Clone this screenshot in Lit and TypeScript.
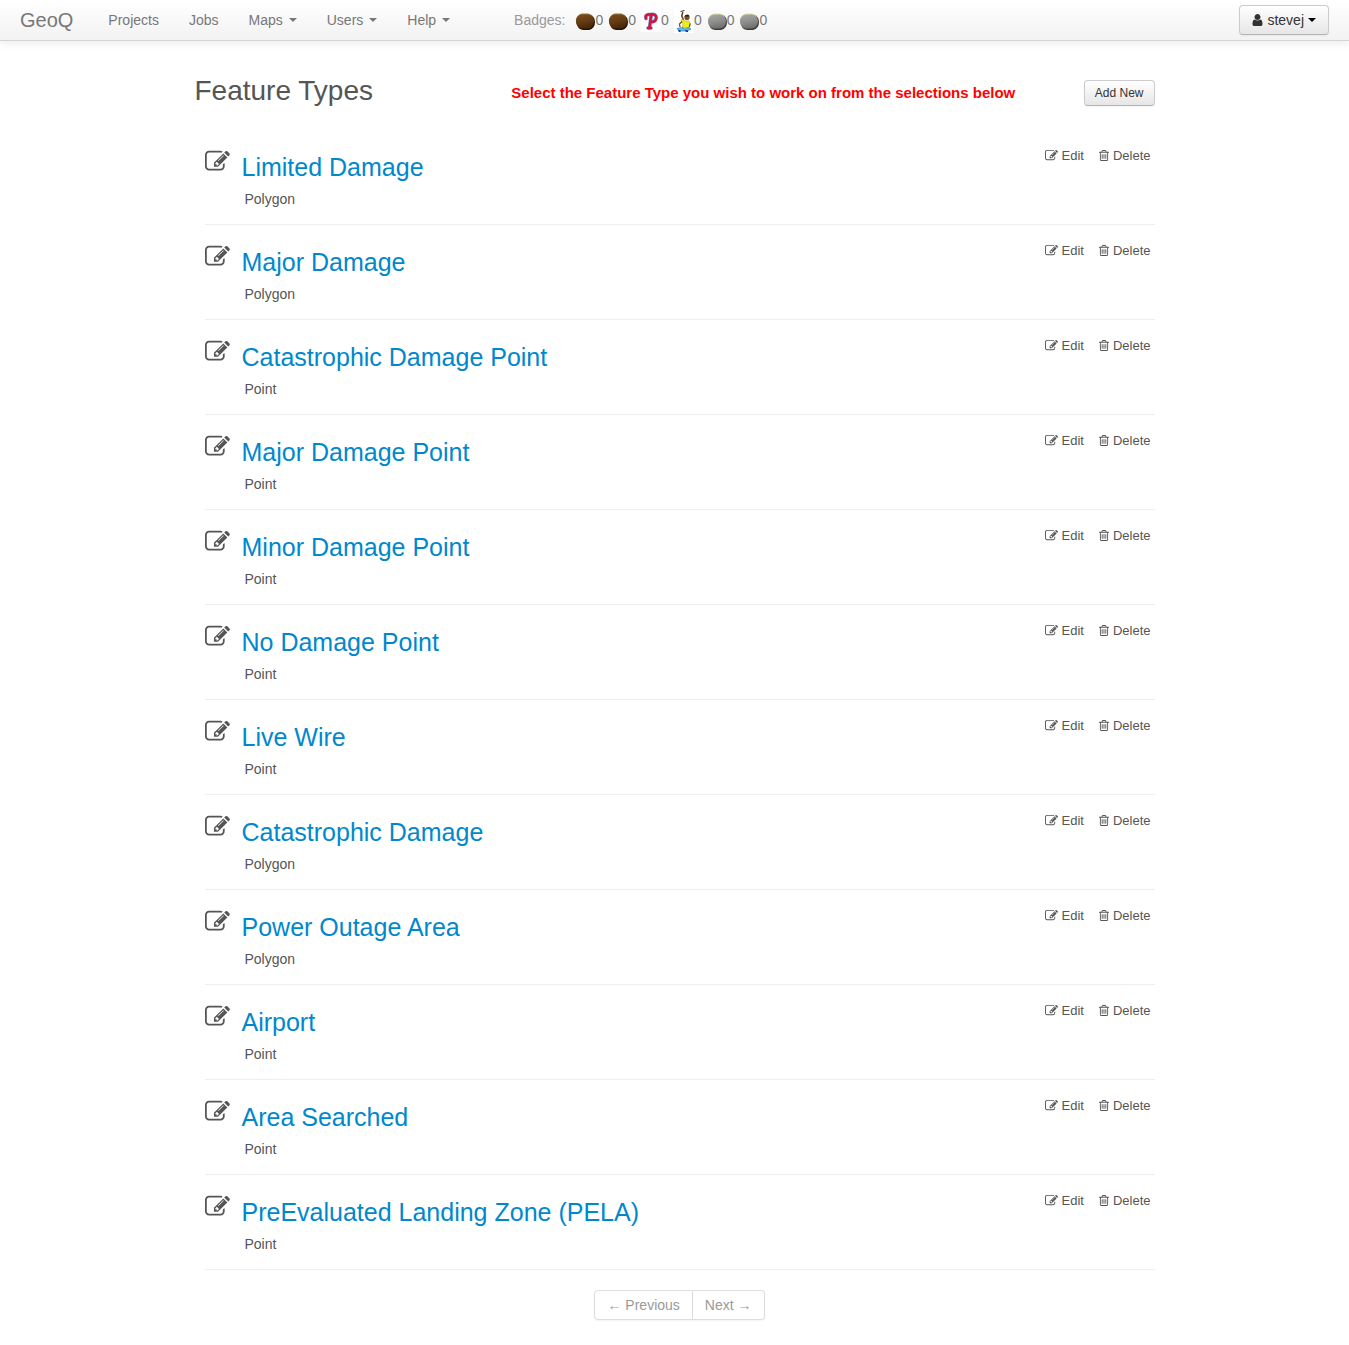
import { LitElement, html, css, svg } from "lit";
import { customElement, property } from "lit/decorators.js";

const EDIT =
  "M888 1184l116-116-152-152-116 116v56h96v96h56zm440-720q-16-16-33 1l-350 350q-17 17-1 33t33-1l350-350q17-17 1-33zm80 594v190q0 119-84.5 203.5t-203.5 84.5h-832q-119 0-203.5-84.5t-84.5-203.5v-832q0-119 84.5-203.5t203.5-84.5h832q63 0 117 25 15 7 18 23 3 17-9 29l-49 49q-14 14-32 8-23-6-45-6h-832q-66 0-113 47t-47 113v832q0 66 47 113t113 47h832q66 0 113-47t47-113v-126q0-13 9-22l64-64q15-15 35-7t20 29zm-96-738l288 288-672 672h-288v-288zm444 132l-92 92-288-288 92-92q28-28 68-28t68 28l152 152q28 28 28 68t-28 68z";
const TRASH =
  "M704 736v576q0 14-9 23t-23 9h-64q-14 0-23-9t-9-23v-576q0-14 9-23t23-9h64q14 0 23 9t9 23zm256 0v576q0 14-9 23t-23 9h-64q-14 0-23-9t-9-23v-576q0-14 9-23t23-9h64q14 0 23 9t9 23zm256 0v576q0 14-9 23t-23 9h-64q-14 0-23-9t-9-23v-576q0-14 9-23t23-9h64q14 0 23 9t9 23zm128 724v-948h-896v948q0 22 7 40.5t14.5 27 10.5 8.5h832q3 0 10.5-8.5t14.5-27 7-40.5zm-672-1076h448l-48-117q-7-9-17-11h-317q-10 2-17 11zm928 32v64q0 14-9 23t-23 9h-96v948q0 83-47 143.5t-113 60.5h-832q-66 0-113-58.5t-47-141.5v-952h-96q-14 0-23-9t-9-23v-64q0-14 9-23t23-9h309l70-167q15-37 54-63t79-26h320q40 0 79 26t54 63l70 167h309q14 0 23 9t9 23z";
const USER =
  "M1536 1399q0 109-62.5 187t-150.5 78h-854q-88 0-150.5-78t-62.5-187q0-85 8.5-160.5t31.5-152 58.5-131 94-89 134.5-34.5q131 128 313 128t313-128q76 0 134.5 34.5t94 89 58.5 131 31.5 152 8.5 160.5zm-256-887q0 159-112.5 271.5t-271.5 112.5-271.5-112.5-112.5-271.5 112.5-271.5 271.5-112.5 271.5 112.5 112.5 271.5z";

const stone = (id: string, light: string, mid: string, dark: string, edge: string, rim: string) => svg`
  <defs>
    <linearGradient id=${id} x1="0" y1="0" x2="0.3" y2="1">
      <stop offset="0" stop-color=${light}></stop>
      <stop offset="0.6" stop-color=${mid}></stop>
      <stop offset="1" stop-color=${dark}></stop>
    </linearGradient>
  </defs>
  <path d="M7 2.500H14Q20 4 20 10Q20 16.500 14 18H8Q2 17 1.500 10Z" fill=${edge}></path>
  <path d="M7 1.500H13Q16 2 17.500 4.500L3 13Q0.500 11 0.800 8Q2 2.500 7 1.500Z" fill=${rim}></path>
  <path d="M7 2.500H13Q18.800 3.500 19 9Q18.800 15.500 13 16.500H7Q1.200 15.500 1 9.500Q1.200 3.500 7 2.500Z" fill="url(#${id})"></path>`;

const brown = svg`${stone("brown", "#7a4d1c", "#633a12", "#4a280a", "#1f1608", "#8a7445")}`;
const grey = svg`${stone("grey", "#a8a8a8", "#8d8d8d", "#727272", "#3c3c3a", "#e2dc9c")}`;

const emblem = svg`
  <rect width="20" height="20" fill="#fff"></rect>
  <g fill="none" stroke-linecap="round" stroke-linejoin="round">
    <path d="M5 6.500C3.800 3 7 2.200 10 2.200C14 2 15.500 3.800 15.200 6C14.800 9 12.500 10 10.500 9.800M10.200 3L8.500 16M7 16H10" stroke="#6f93c8" stroke-width="3.600"></path>
    <path d="M5 6.500C3.800 3 7 2.200 10 2.200C14 2 15.500 3.800 15.200 6C14.800 9 12.500 10 10.500 9.800M10.200 3L8.500 16M7 16H10" stroke="#d8123f" stroke-width="2.400"></path>
  </g>`;

const person = svg`
  <rect width="20" height="24" fill="#fff"></rect>
  <path d="M9.500 11L7.800 7L8.800 3" fill="none" stroke="#6b4420" stroke-width="1.600"></path>
  <path d="M6.500 2.500L10.500 1.500" stroke="#333" stroke-width="1"></path>
  <circle cx="13" cy="8.500" r="2.600" fill="#7a5028"></circle>
  <path d="M10.200 7.500Q12 4.500 15 6L15.500 7.500Z" fill="#2b2118"></path>
  <path d="M8 10L11 12L15 12L16.500 15L14.500 18.500H8.500L9 14L7 12Z" fill="#f2ee12" stroke="#99921a" stroke-width="0.500"></path>
  <path d="M8 12.500L5.500 15L6 18M16 14.500L15.500 18" fill="none" stroke="#6b4420" stroke-width="1.200"></path>
  <path d="M3 19.500L8 18.500L11 20L15 18.500L17 20L13 22L5 22Z" fill="#59c5e8" stroke="#1e6a9c" stroke-width="0.600"></path>
  <path d="M4.500 21.500L6.500 22.500M11.500 21.500L14 22.500" stroke="#1722a0" stroke-width="1.600"></path>`;

const BADGES = [
  { label: "Brown badge", art: brown, tall: false },
  { label: "Brown badge", art: brown, tall: false },
  { label: "Emblem badge", art: emblem, tall: false },
  { label: "Person badge", art: person, tall: true },
  { label: "Grey badge", art: grey, tall: false },
  { label: "Grey badge", art: grey, tall: false },
];

const NAV = [
  { label: "Projects", menu: false },
  { label: "Jobs", menu: false },
  { label: "Maps", menu: true },
  { label: "Users", menu: true },
  { label: "Help", menu: true },
];

const FEATURES: [string, string][] = [
  ["Limited Damage", "Polygon"],
  ["Major Damage", "Polygon"],
  ["Catastrophic Damage Point", "Point"],
  ["Major Damage Point", "Point"],
  ["Minor Damage Point", "Point"],
  ["No Damage Point", "Point"],
  ["Live Wire", "Point"],
  ["Catastrophic Damage", "Polygon"],
  ["Power Outage Area", "Polygon"],
  ["Airport", "Point"],
  ["Area Searched", "Point"],
  ["PreEvaluated Landing Zone (PELA)", "Point"],
];

const glyph = (d: string, cls: string, box = "0 0 1792 1792") =>
  html`<svg class=${cls} viewBox=${box} fill="currentColor" aria-hidden="true"><path d=${d}></path></svg>`;

@customElement("nav-bar")
class NavBar extends LitElement {
  static styles = css`
    :host { display: block; }
    .bar {
      display: flex;
      align-items: center;
      height: 40px;
      padding: 0 20px;
      background: linear-gradient(#ffffff, #f2f2f2);
      border-bottom: 1px solid #d4d4d4;
      box-shadow: 0 1px 10px rgba(0, 0, 0, 0.1);
      color: #777;
    }
    .brand {
      margin-right: 20px;
      font-size: 20px;
      color: #777;
      text-decoration: none;
    }
    .links { display: flex; }
    .link {
      display: flex;
      align-items: center;
      gap: 6px;
      padding: 10px 15px;
      border: 0;
      background: none;
      font: inherit;
      color: #777;
      text-decoration: none;
    }
    .caret {
      border: 4px solid transparent;
      border-top-color: currentColor;
      border-bottom: 0;
    }
    .badges {
      display: flex;
      align-items: center;
      gap: 5px;
      margin-left: 49px;
    }
    .caption { margin-right: 5px; color: #999; }
    .badge { display: flex; align-items: center; height: 20px; }
    .art { width: 20px; height: 20px; margin-top: 3px; }
    .tall { height: 24px; margin-top: 1px; }
    .account {
      display: flex;
      align-items: center;
      gap: 4px;
      height: 30px;
      margin-left: auto;
      padding: 0 12px;
      border: 1px solid #ccc;
      border-bottom-color: #b3b3b3;
      border-radius: 4px;
      background: linear-gradient(#ffffff, #e6e6e6);
      box-shadow: 0 1px 2px rgba(0, 0, 0, 0.05);
      font: inherit;
      color: #333;
    }
    .user { width: 11px; height: 14px; }
    .dark { color: #000; }
  `;

  render() {
    return html`
      <nav class="bar">
        <a class="brand" href="#">GeoQ</a>
        <div class="links">
          ${NAV.map((n) =>
            n.menu
              ? html`<button class="link" type="button">${n.label}<span class="caret"></span></button>`
              : html`<a class="link" href="#">${n.label}</a>`
          )}
        </div>
        <div class="badges">
          <span class="caption">Badges:</span>
          ${BADGES.map(
            (b) => html`<span class="badge"><svg class="art ${b.tall ? "tall" : ""}" viewBox="0 0 20 ${b.tall ? 24 : 20}" role="img" aria-label=${b.label}>${b.art}</svg>0</span>`
          )}
        </div>
        <button class="account" type="button">
          ${glyph(USER, "user", "192 0 1408 1792")}<span>stevej</span><span class="caret dark"></span>
        </button>
      </nav>
    `;
  }
}

@customElement("feature-row")
class FeatureRow extends LitElement {
  @property() name = "";
  @property() kind = "";

  static styles = css`
    :host { display: block; }
    .row {
      display: flex;
      align-items: flex-start;
      padding: 18px 0 15px;
      border-bottom: 1px solid #eee;
    }
    .big { flex: none; width: 25px; height: 25px; margin: 1px 12px 0 0; color: #555; }
    .body { flex: 1; }
    .title { margin: 0 0 3px; font-size: 25px; font-weight: normal; line-height: 38px; }
    .name { color: #0088cc; text-decoration: none; }
    .kind { margin: 0; padding-left: 3px; line-height: 20px; }
    .actions { display: flex; gap: 15px; padding: 0 4px; font-size: 13px; line-height: 16px; }
    .action { display: flex; align-items: flex-start; gap: 4px; color: #555; text-decoration: none; }
    .edit { width: 13px; height: 13px; margin-top: 1px; }
    .trash { width: 10px; height: 13px; margin-top: 1px; }
  `;

  render() {
    return html`
      <article class="row">
        ${glyph(EDIT, "big")}
        <div class="body">
          <h3 class="title"><a class="name" href="#">${this.name}</a></h3>
          <p class="kind">${this.kind}</p>
        </div>
        <div class="actions">
          <a class="action" href="#">${glyph(EDIT, "edit")}Edit</a>
          <a class="action" href="#">${glyph(TRASH, "trash", "192 0 1408 1792")}Delete</a>
        </div>
      </article>
    `;
  }
}

@customElement("app-root")
class AppRoot extends LitElement {
  static styles = css`
    :host {
      display: block;
      min-height: 100vh;
      background: #fff;
      color: #555;
      font: 14px/20px "Liberation Sans", Arial, Helvetica, sans-serif;
    }
    .page { max-width: 960px; margin: 0 auto; padding: 30px 0 25px; }
    .head { display: flex; align-items: center; height: 44px; margin-bottom: 15px; }
    .heading { flex: 0 0 33%; align-self: flex-start; margin: 0; font-size: 28px; font-weight: normal; line-height: 40px; }
    .hint { flex: 1; margin: 0; font-size: 15px; font-weight: bold; color: #f00; }
    .add {
      height: 26px;
      padding: 0 10px;
      border: 1px solid #ccc;
      border-bottom-color: #b3b3b3;
      border-radius: 4px;
      background: linear-gradient(#ffffff, #e6e6e6);
      box-shadow: 0 1px 2px rgba(0, 0, 0, 0.05);
      font: inherit;
      font-size: 12px;
      color: #333;
    }
    .list { padding-left: 10px; }
    .pager { display: flex; justify-content: center; margin-top: 20px; padding-left: 10px; }
    .step {
      height: 30px;
      padding: 0 12px;
      border: 1px solid #ddd;
      background: #fff;
      box-shadow: 0 1px 2px rgba(0, 0, 0, 0.05);
      font: inherit;
      color: #999;
    }
    .prev { border-radius: 4px 0 0 4px; }
    .next { border-left: 0; border-radius: 0 4px 4px 0; }
  `;

  render() {
    return html`
      <nav-bar></nav-bar>
      <main class="page">
        <header class="head">
          <h2 class="heading">Feature Types</h2>
          <p class="hint">Select the Feature Type you wish to work on from the selections below</p>
          <button class="add" type="button">Add New</button>
        </header>
        <section class="list">
          ${FEATURES.map(([name, kind]) => html`<feature-row .name=${name} .kind=${kind}></feature-row>`)}
        </section>
        <div class="pager">
          <button class="step prev" type="button" disabled>← Previous</button>
          <button class="step next" type="button" disabled>Next →</button>
        </div>
      </main>
    `;
  }
}
